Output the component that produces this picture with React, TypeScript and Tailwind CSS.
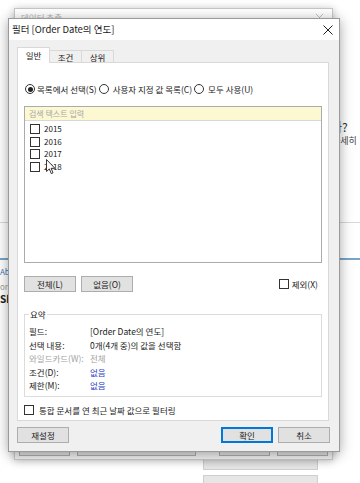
import React from 'react';

const years = ['2015', '2016', '2017', '2018'];

function Check() {
  return <span className="block w-[10px] h-[10px] border border-[#333] bg-white shrink-0" />;
}

function Radio({ on }: { on?: boolean }) {
  return (
    <span className="flex items-center justify-center w-[10px] h-[10px] rounded-full border border-[#333] bg-white shrink-0">
      {on && <span className="block w-[5px] h-[5px] rounded-full bg-[#222]" />}
    </span>
  );
}

function Btn({ label, w, primary }: { label: string; w: string; primary?: boolean }) {
  return (
    <div
      className={`flex items-center justify-center h-[16px] ${w} bg-[#e1e1e1] text-[8.5px] text-[#1a1a1a] ${
        primary ? 'border-2 border-[#0078d7]' : 'border border-[#adadad]'
      }`}
    >
      {label}
    </div>
  );
}

function Tab({ label, active }: { label: string; active?: boolean }) {
  if (active) {
    return (
      <div className="relative z-10 flex items-center justify-center w-[33px] h-[16px] bg-white border border-b-0 border-[#d9d9d9] text-[8.5px]">
        {label}
      </div>
    );
  }
  return (
    <div className="flex items-center justify-center w-[32px] h-[14px] mb-[-1px] bg-[#f0f0f0] border border-l-0 border-[#d9d9d9] text-[8.5px]">
      {label}
    </div>
  );
}

function SummaryRow({ label, value, tone }: { label: string; value: string; tone?: 'grey' | 'blue' }) {
  const valueColor = tone === 'blue' ? 'text-[#2b3fc4]' : tone === 'grey' ? 'text-[#a3a3a3]' : 'text-[#1a1a1a]';
  return (
    <div className="flex items-center h-[13.5px] text-[8.5px]">
      <span className={`w-[61px] whitespace-nowrap ${tone === 'grey' ? 'text-[#a3a3a3]' : 'text-[#1a1a1a]'}`}>{label}</span>
      <span className={`whitespace-nowrap ${valueColor}`}>{value}</span>
    </div>
  );
}

function BackgroundPage() {
  return (
    <div className="absolute inset-0 flex flex-col">
      <div className="h-[119px]" />
      <div className="pl-[331px] text-[12px] leading-[16px] text-[#333] whitespace-nowrap">까?</div>
      <div className="pl-[332px] text-[9px] leading-[12px] text-[#444] whitespace-nowrap">자세히</div>
      <div className="h-[75px]" />
      <div className="h-px bg-[#d9d9d9]" />
      <div className="h-[35px]" />
      <div className="h-[2px] bg-[#78a4c6]" />
      <div className="pt-[7px] text-[8px] leading-[10px] text-[#3d7ab8] whitespace-nowrap">About</div>
      <div className="mt-[5px] text-[8px] leading-[10px] text-[#a0a0a0] whitespace-nowrap">ordered</div>
      <div className="mt-[1px] text-[10px] leading-[12px] text-[#222] font-semibold whitespace-nowrap">Show</div>
    </div>
  );
}

function BackDialog() {
  return (
    <div className="absolute left-[14px] top-[8px] w-[319px] h-[452px] flex flex-col border border-[#c6c6c6] bg-[#f0f0f0] shadow-[0_1px_8px_rgba(0,0,0,0.25)]">
      <div className="flex items-center justify-between h-[16px] bg-white px-[6px]">
        <span className="text-[8.5px] text-[#b4b4b4]">데이터 추출</span>
        <svg width="9" height="9" viewBox="0 0 10 10" className="mr-[2px]">
          <path d="M1 1L9 9M9 1L1 9" stroke="#bbb" strokeWidth="1" />
        </svg>
      </div>
      <div className="flex-1" />
      <div className="flex items-center h-[15px] mb-[3px] pl-[4px]">
        <div className="w-[51px] h-full border border-[#adadad] bg-[#e1e1e1]" />
        <div className="ml-[7px] w-[119px] h-full border border-[#adadad] bg-[#e1e1e1]" />
        <div className="ml-[23px] w-[51px] h-full border border-[#adadad] bg-[#e1e1e1]" />
        <div className="ml-[7px] w-[51px] h-full border border-[#adadad] bg-[#e1e1e1]" />
      </div>
    </div>
  );
}

function FilterDialog() {
  return (
    <div className="absolute left-[8px] top-[18px] w-[332px] h-[434px] flex flex-col border border-[#9a9a9a] bg-[#f0f0f0] shadow-[0_2px_12px_rgba(0,0,0,0.35)]">
      <div className="flex items-center justify-between h-[21px] bg-white pl-[3px] pr-[6px] shrink-0">
        <span className="text-[9.5px] text-[#1a1a1a] whitespace-nowrap">필터 [Order Date의 연도]</span>
        <svg width="10" height="10" viewBox="0 0 10 10">
          <path d="M0.5 0.5L9.5 9.5M9.5 0.5L0.5 9.5" stroke="#222" strokeWidth="1" />
        </svg>
      </div>

      <div className="flex-1 flex flex-col pl-[8px] pr-[10px] pt-[7px] pb-[7px]">
        <div className="flex items-end">
          <Tab label="일반" active />
          <Tab label="조건" />
          <Tab label="상위" />
        </div>

        <div className="flex flex-col w-[312px] h-[359px] mt-[-1px] bg-white border border-[#d9d9d9] px-[6px]">
          <div className="flex items-center h-[14px] mt-[19px] text-[8.5px] whitespace-nowrap">
            <span className="ml-[1px]"><Radio on /></span>
            <span className="ml-[2px]">목록에서 선택(S)</span>
            <span className="ml-[2px]"><Radio /></span>
            <span className="ml-[4px]">사용자 지정 값 목록(C)</span>
            <span className="ml-[2px]"><Radio /></span>
            <span className="ml-[4px]">모두 사용(U)</span>
          </div>

          <div className="flex flex-col w-[298px] h-[157px] mt-[10px] border border-[#ababab] bg-white">
            <div className="flex items-center h-[14px] bg-[#fbf8d2] border-b border-[#d8d8d8] pl-[4px] text-[8px] text-[#a8a8a8]">
              검색 텍스트 입력
            </div>
            <div className="flex flex-col pt-[2px] pl-[5px]">
              {years.map((y) => (
                <div key={y} className="flex items-center h-[12.5px] text-[8px]">
                  <Check />
                  <span className="ml-[4px]">{y}</span>
                </div>
              ))}
            </div>
          </div>

          <div className="flex items-center mt-[13px] h-[16px]">
            <Btn label="전체(L)" w="w-[52px]" />
            <span className="ml-[5px]"><Btn label="없음(O)" w="w-[52px]" /></span>
            <div className="ml-auto mr-[4px] flex items-center text-[8.5px]">
              <Check />
              <span className="ml-[3px]">제외(X)</span>
            </div>
          </div>

          <div className="relative mt-[22px] w-[298px] h-[83px] border border-[#dcdcdc] pl-[4px] pt-[10px]">
            <span className="absolute left-[4px] top-[-7px] bg-white px-px text-[8.5px] leading-[12px]">요약</span>
            <SummaryRow label="필드:" value="[Order Date의 연도]" />
            <SummaryRow label="선택 내용:" value="0개(4개 중)의 값을 선택함" />
            <SummaryRow label="와일드카드(W):" value="전체" tone="grey" />
            <SummaryRow label="조건(D):" value="없음" tone="blue" />
            <SummaryRow label="제한(M):" value="없음" tone="blue" />
          </div>

          <div className="flex items-center mt-[7px] h-[12px] text-[8.5px] whitespace-nowrap">
            <Check />
            <span className="ml-[5px]">통합 문서를 연 최근 날짜 값으로 필터링</span>
          </div>
        </div>

        <div className="flex items-center mt-[6px]">
          <Btn label="재설정" w="w-[52px]" />
          <span className="ml-auto"><Btn label="확인" w="w-[52px]" primary /></span>
          <span className="ml-[5px] mr-[-1px]"><Btn label="취소" w="w-[52px]" /></span>
        </div>
      </div>
    </div>
  );
}

function Cursor() {
  return (
    <svg className="absolute left-[46px] top-[159px]" width="10" height="16" viewBox="0 0 10 16">
      <path d="M0.5 0.5V12.5L3.3 9.9L5.3 14.6L7 13.9L5.1 9.3H8.9Z" fill="#fff" stroke="#222" strokeWidth="0.9" strokeLinejoin="round" />
    </svg>
  );
}

export default function App() {
  return (
    <div className="relative w-[360px] h-[483px] overflow-hidden bg-white font-['Noto_Sans_CJK_KR','Noto_Sans',sans-serif] text-[#1a1a1a]">
      <BackgroundPage />
      <div className="absolute left-[203px] top-[452px] w-[115px] h-[18px] border border-[#cfcfcf] bg-[#e6e6e6]" />
      <div className="absolute left-[203px] top-[475px] w-[115px] h-[16px] border border-[#cfcfcf] bg-[#e6e6e6]" />
      <BackDialog />
      <FilterDialog />
      <Cursor />
    </div>
  );
}
